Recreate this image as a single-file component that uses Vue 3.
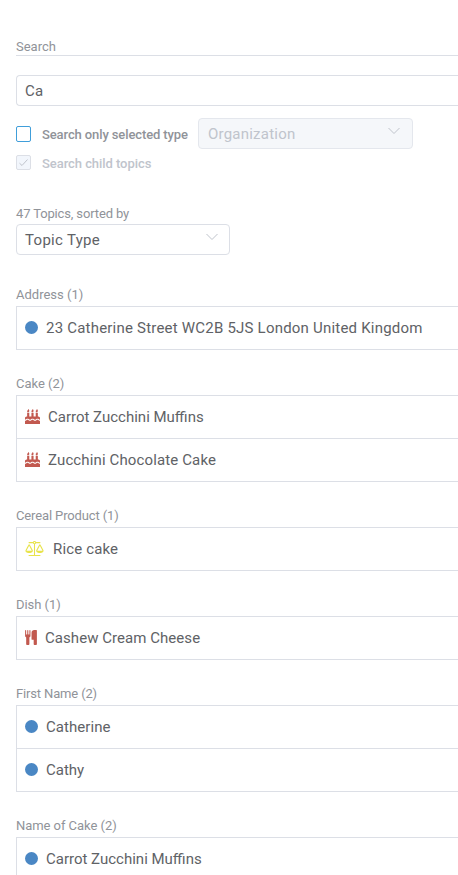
<script setup>
const groups = [
  { title: 'Address (1)', track: 0, items: [{ icon: 'circle', track: 0.21, text: '23 Catherine Street WC2B 5JS London United Kingdom' }] },
  { title: 'Cake (2)', track: 0, items: [{ icon: 'cake', track: 0, text: 'Carrot Zucchini Muffins' }, { icon: 'cake', track: 0.13, text: 'Zucchini Chocolate Cake' }] },
  { title: 'Cereal Product (1)', track: -0.13, items: [{ icon: 'scale', track: 0.15, text: 'Rice cake' }] },
  { title: 'Dish (1)', track: -0.05, items: [{ icon: 'cutlery', track: 0.05, text: 'Cashew Cream Cheese' }] },
  { title: 'First Name (2)', track: -0.15, items: [{ icon: 'circle', track: 0.05, text: 'Catherine' }, { icon: 'circle', track: 0, text: 'Cathy' }] },
  { title: 'Name of Cake (2)', track: -0.05, items: [{ icon: 'circle', track: 0, text: 'Carrot Zucchini Muffins' }] },
]

const flame = 'q0 77-36 118.5t-92 41.5q-53 0-90.5-37.5t-37.5-90.5q0-29 9.5-51t23.5-34 31-28 31-31.5 23.5-44.5 9.5-67q38 0 83 74t45 150z'
const pan = 'q0 73-46.5 131t-117.5 91-144.5 49.5-139.5 16.5-139.5-16.5-144.5-49.5-117.5-91-46.5-131q0-11 35-81t92-174.5 107-195.5 102-184 56-100q18-33 56-33t56 33q4 7 56 100t102 184 107 195.5 92 174.5 35 81z'
const icons = {
  circle: { box: '0 0 1536 1536', d: 'M1536 768A768 768 0 1 1 0 768A768 768 0 1 1 1536 768z' },
  cake: {
    box: '0 0 1792 1792',
    d: 'M1792 1408v384H0v-384q45 0 85-14t59-27.5 47-37.5q30-27 51.5-38t56.5-11q24 0 44 7t31 15 33 27q29 25 47 38t58 27 86 14q45 0 85-14.5t58-27 48-37.5q21-19 32.5-27t31-15 43.5-7q35 0 56.5 11t51.5 38q28 24 47 37.5t59 27.5 85 14 85-14 59-27.5 47-37.5q30-27 51.5-38t56.5-11q34 0 55.5 11t51.5 38q28 24 47 37.5t59 27.5 85 14zm0-320v192q-24 0-44-7t-31-15-33-27q-29-25-47-38t-58-27-85-14q-46 0-86 14t-58 27-47 38q-22 19-33 27t-31 15-44 7q-35 0-56.5-11t-51.5-38q-29-25-47-38t-58-27-86-14q-45 0-85 14.5t-58 27-48 37.5q-21 19-32.5 27t-31 15-43.5 7q-35 0-56.5-11t-51.5-38q-28-24-47-37.5t-59-27.5-85-14q-46 0-86 14t-58 27-47 38q-30 27-51.5 38t-56.5 11v-192q0-80 56-136t136-56h64v-448h256v448h256v-448h256v448h256v-448h256v448h64q80 0 136 56t56 136z'
      + 'M512 224' + flame + 'M1024 224' + flame + 'M1536 224' + flame,
  },
  scale: {
    box: '0 0 2176 1792',
    d: 'M1269 256q-14 40-45.5 71.5t-71.5 45.5v1291h608q14 0 23 9t9 23v64q0 14-9 23t-23 9h-1344q-14 0-23-9t-9-23v-64q0-14 9-23t23-9h608v-1291q-40-14-71.5-45.5t-45.5-71.5h-491q-14 0-23-9t-9-23v-64q0-14 9-23t23-9h491q21-57 70-92.5t111-35.5 111 35.5 70 92.5h491q14 0 23 9t9 23v64q0 14-9 23t-23 9z'
      + 'M1088 272q33 0 56.5-23.5t23.5-56.5-23.5-56.5-56.5-23.5-56.5 23.5-23.5 56.5 23.5 56.5 56.5 23.5z'
      + 'M1728 576l-314 576h628zM448 576l-314 576h628zM2176 1152' + pan + 'M896 1152' + pan,
  },
  cutlery: {
    box: '128 64 1408 1792',
    d: 'M768 128v640q0 61-35.5 111t-92.5 70v779q0 52-38 90t-90 38h-128q-52 0-90-38t-38-90V949q-57-20-92.5-70T128 768V128q0-26 19-45t45-19 45 19 19 45v416q0 26 19 45t45 19 45-19 19-45V128q0-26 19-45t45-19 45 19 19 45v416q0 26 19 45t45 19 45-19 19-45V128q0-26 19-45t45-19 45 19 19 45zm768 0v1600q0 52-38 90t-90 38h-128q-52 0-90-38t-38-90v-512H928q-13 0-22.5-9.5T896 1184V384q0-132 94-226t226-94h256q26 0 45 19t19 45z',
  },
}
</script>

<template>
  <main class="page">
    <div class="heading">Search</div>
    <div class="input">Ca</div>
    <div class="filter">
      <span class="check"></span>
      <span class="check-label">Search only selected type</span>
      <div class="select disabled">
        <span>Organization</span>
        <svg class="chevron" viewBox="0 0 14 14"><path d="M1.5 4 7 9.5 12.5 4" /></svg>
      </div>
    </div>
    <div class="child muted">
      <span class="check off">
        <svg viewBox="0 0 13 13"><path d="M2.5 7.2 5 9.5 10.5 3.5" /></svg>
      </span>
      <span class="check-label">Search child topics</span>
    </div>
    <div class="label sorted">47 Topics, sorted by</div>
    <div class="select">
      <span>Topic Type</span>
      <svg class="chevron" viewBox="0 0 14 14"><path d="M1.5 4 7 9.5 12.5 4" /></svg>
    </div>
    <section v-for="g in groups" :key="g.title" class="group">
      <div class="label" :style="{ letterSpacing: g.track + 'px' }">{{ g.title }}</div>
      <div class="list">
        <div v-for="item in g.items" :key="item.text" class="item">
          <svg :class="['icon', item.icon]" :viewBox="icons[item.icon].box">
            <path fill-rule="evenodd" :d="icons[item.icon].d" />
          </svg>
          <span :style="{ letterSpacing: item.track + 'px' }">{{ item.text }}</span>
        </div>
      </div>
    </section>
  </main>
</template>

<style>
body { margin: 0; background: #fff; overflow: hidden; }
</style>

<style scoped>
.page {
  box-sizing: border-box;
  height: 875px;
  overflow: hidden;
  padding: 39px 0 0 16px;
  font-family: Roboto, sans-serif;
  font-size: 15px;
  color: #606266;
}
.heading, .label {
  font-size: 13px;
  line-height: 16px;
  color: #909399;
}
.heading { border-bottom: 1px solid #dcdfe6; }
.input {
  box-sizing: border-box;
  height: 31px;
  margin-top: 19px;
  padding-left: 8px;
  line-height: 30px;
  letter-spacing: 0.15px;
  border: 1px solid #dcdfe6;
  border-right: 0;
  border-radius: 4px 0 0 4px;
}
.filter { display: flex; align-items: center; margin-top: 12px; height: 31px; }
.check {
  box-sizing: border-box;
  flex: none;
  width: 15px;
  height: 16px;
  border: 1px solid #409eda;
  border-radius: 2px;
}
.check-label {
  margin-left: 11px;
  padding-top: 2px;
  width: 156px;
  font-size: 13px;
  line-height: 16px;
  font-weight: 500;
  letter-spacing: -0.11px;
  color: #909399;
  white-space: nowrap;
}
.child { display: flex; align-items: center; height: 15px; margin-top: 6px; }
.muted .check-label { color: #c0c4cc; letter-spacing: -0.06px; }
.off { height: 15px; border-color: #dcdfe6; background: #f2f6fc; }
.off svg { display: block; width: 13px; height: 13px; }
.off path, .chevron path { fill: none; stroke: #c0c4cc; stroke-width: 1; }
.sorted { margin-top: 36px; letter-spacing: -0.14px; }
.select {
  box-sizing: border-box;
  display: flex;
  align-items: center;
  justify-content: space-between;
  width: 214px;
  height: 31px;
  margin-top: 2px;
  padding: 0 10px 0 8px;
  border: 1px solid #dcdfe6;
  border-radius: 4px;
  letter-spacing: 0.3px;
}
.disabled {
  width: 215px;
  margin-top: 0;
  padding: 0 11px 0 9px;
  letter-spacing: 0.22px;
  color: #c0c4cc;
  background: #f5f7fa;
  border-color: #e4e7ed;
}
.chevron { width: 14px; height: 14px; margin-bottom: 5px; }
.group { margin-top: 26px; }
.select + .group { margin-top: 32px; }
.label { height: 16px; }
.list { margin-top: 3px; border-top: 1px solid #dcdfe6; border-left: 1px solid #dcdfe6; }
.item {
  box-sizing: border-box;
  display: flex;
  align-items: center;
  height: 43px;
  padding-left: 8px;
  border-bottom: 1px solid #dcdfe6;
  white-space: nowrap;
}
.icon { flex: none; fill: #4a87c4; margin: 0 8px 1px 0; }
.circle { width: 13px; height: 13px; }
.cake { width: 15px; height: 15px; fill: #c2594f; }
.scale { width: 19px; height: 15px; fill: #e8e34b; margin-right: 9px; }
.cutlery { width: 12px; height: 15px; fill: #c2594f; }
</style>
